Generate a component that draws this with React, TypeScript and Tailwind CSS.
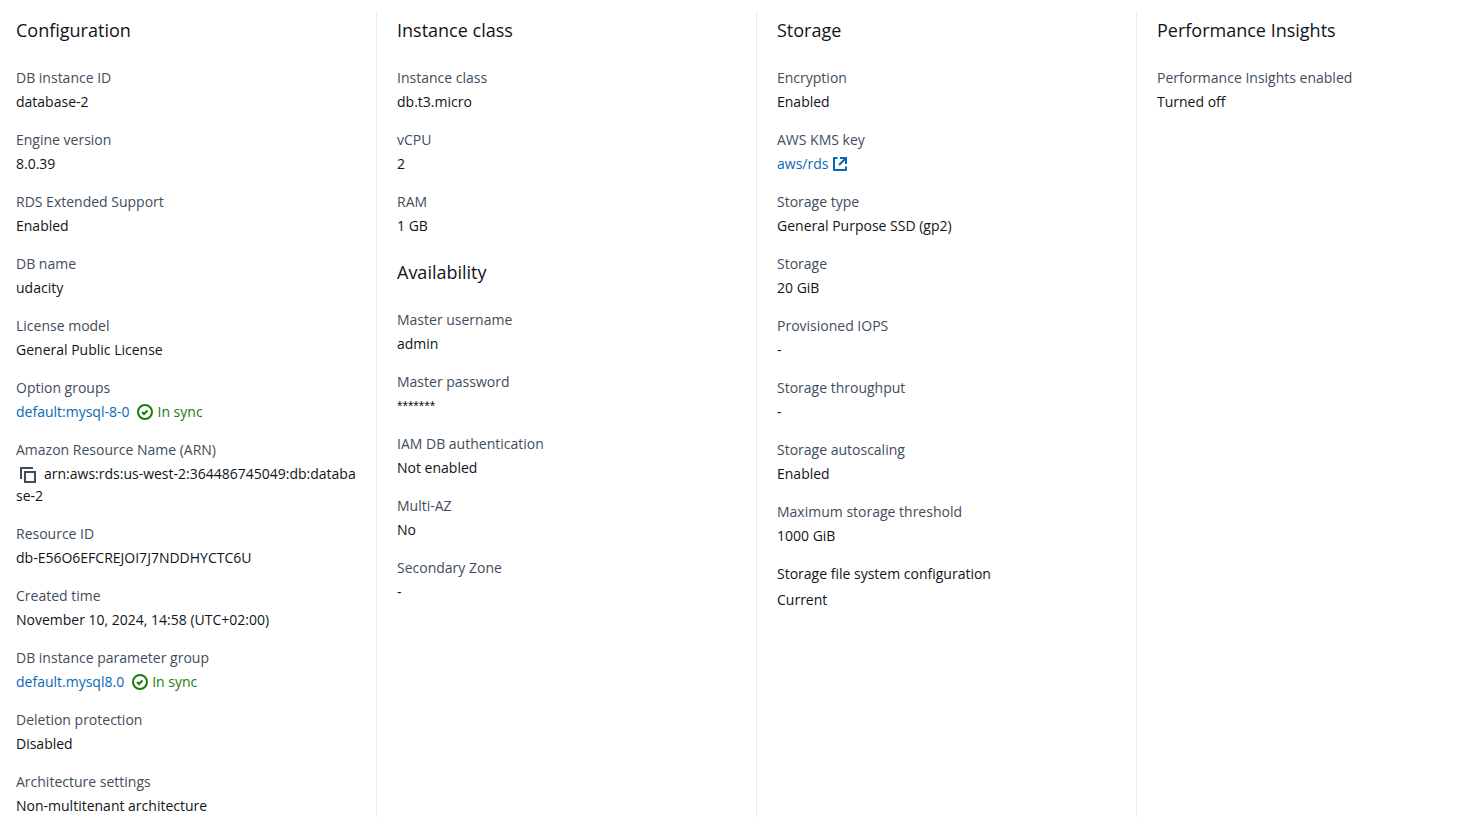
import type { ReactNode } from "react";

type Item = { label: string; value: ReactNode; plain?: boolean };
type Group = { title: string; items: Item[] };

function InSync() {
  return (
    <span className="inline-flex items-center gap-1 text-[#1d7a0c]">
      <svg className="size-4" viewBox="0 0 16 16" fill="none" stroke="currentColor" strokeWidth="2" aria-hidden="true">
        <circle cx="8" cy="8" r="7" />
        <path d="m5 8 2 2 3.521-3.521" />
      </svg>
      In sync
    </span>
  );
}

function GroupLink({ name }: { name: string }) {
  return (
    <span className="flex gap-2">
      <a href="#" className="text-[#0868b8] hover:underline">
        {name}
      </a>
      <InSync />
    </span>
  );
}

function Arn({ value }: { value: string }) {
  return (
    <span className="break-all">
      <button
        type="button"
        aria-label="Copy ARN"
        className="mr-2 ml-1 inline-block cursor-pointer align-middle text-[#414d5c]"
      >
        <svg className="block size-4" viewBox="0 0 16 16" fill="none" stroke="currentColor" strokeWidth="2">
          <path d="M15 5H5v10h10V5Z" />
          <path d="M13 1H1v11" />
        </svg>
      </button>
      {value}
    </span>
  );
}

const columns: Group[][] = [
  [
    {
      title: "Configuration",
      items: [
        { label: "DB instance ID", value: "database-2" },
        { label: "Engine version", value: "8.0.39" },
        { label: "RDS Extended Support", value: "Enabled" },
        { label: "DB name", value: "udacity" },
        { label: "License model", value: "General Public License" },
        { label: "Option groups", value: <GroupLink name="default:mysql-8-0" /> },
        {
          label: "Amazon Resource Name (ARN)",
          value: <Arn value="arn:aws:rds:us-west-2:364486745049:db:database-2" />,
        },
        { label: "Resource ID", value: "db-E56O6EFCREJOI7J7NDDHYCTC6U" },
        { label: "Created time", value: "November 10, 2024, 14:58 (UTC+02:00)" },
        { label: "DB instance parameter group", value: <GroupLink name="default.mysql8.0" /> },
        { label: "Deletion protection", value: "Disabled" },
        { label: "Architecture settings", value: "Non-multitenant architecture" },
      ],
    },
  ],
  [
    {
      title: "Instance class",
      items: [
        { label: "Instance class", value: "db.t3.micro" },
        { label: "vCPU", value: "2" },
        { label: "RAM", value: "1 GB" },
      ],
    },
    {
      title: "Availability",
      items: [
        { label: "Master username", value: "admin" },
        {
          label: "Master password",
          value: <span className="block font-['Liberation_Sans',sans-serif]">*******</span>,
        },
        { label: "IAM DB authentication", value: "Not enabled" },
        { label: "Multi-AZ", value: "No" },
        { label: "Secondary Zone", value: "-" },
      ],
    },
  ],
  [
    {
      title: "Storage",
      items: [
        { label: "Encryption", value: "Enabled" },
        {
          label: "AWS KMS key",
          value: (
            <a href="#" className="inline-flex items-center gap-1 text-[#0868b8] hover:underline">
              aws/rds
              <svg className="size-4" viewBox="0 0 16 16" fill="none" stroke="currentColor" strokeWidth="2" aria-hidden="true">
                <path d="M9 2h5v5" strokeLinecap="square" />
                <path d="m7 9 7-7" />
                <path d="M5.5 2H2v12h12v-3.5" strokeLinejoin="round" />
              </svg>
            </a>
          ),
        },
        { label: "Storage type", value: "General Purpose SSD (gp2)" },
        { label: "Storage", value: "20 GiB" },
        { label: "Provisioned IOPS", value: "-" },
        { label: "Storage throughput", value: "-" },
        { label: "Storage autoscaling", value: "Enabled" },
        { label: "Maximum storage threshold", value: "1000 GiB" },
        { label: "Storage file system configuration", value: "Current", plain: true },
      ],
    },
  ],
  [
    {
      title: "Performance Insights",
      items: [{ label: "Performance Insights enabled", value: "Turned off" }],
    },
  ],
];

export default function App() {
  return (
    <main className="grid grid-cols-[376fr_380fr_380fr_322fr] bg-white py-[11px] font-['Open_Sans','Noto_Sans',sans-serif] text-sm leading-[22px] text-[#0f141a]">
      {columns.map((groups) => (
        <div
          key={groups[0].title}
          className="flex min-w-0 flex-col gap-6 border-l border-[#e9ebed] pt-2 pr-5 pl-5 first:border-l-0 first:pl-4"
        >
          {groups.map((group) => (
            <section key={group.title} className="flex flex-col gap-[26px]">
              <h3 className="text-lg leading-[22px]">{group.title}</h3>
              <dl className="flex flex-col gap-4">
                {group.items.map((item) => (
                  <div key={item.label} className={item.plain ? "flex flex-col gap-1" : "flex flex-col gap-0.5"}>
                    <dt className={item.plain ? "" : "text-[#414d5c]"}>{item.label}</dt>
                    <dd>{item.value}</dd>
                  </div>
                ))}
              </dl>
            </section>
          ))}
        </div>
      ))}
    </main>
  );
}
